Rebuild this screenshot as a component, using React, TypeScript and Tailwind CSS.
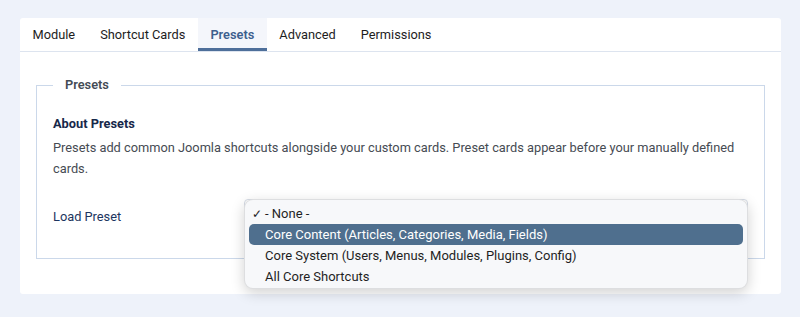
import { useState } from "react";

const tabs = ["Module", "Shortcut Cards", "Presets", "Advanced", "Permissions"];

const presetOptions = [
  "- None -",
  "Core Content (Articles, Categories, Media, Fields)",
  "Core System (Users, Menus, Modules, Plugins, Config)",
  "All Core Shortcuts",
];

export default function App() {
  const [active, setActive] = useState("Presets");
  const [selected] = useState(0);
  const [hovered, setHovered] = useState(1);

  return (
    <div className="min-h-screen bg-[#eef2fa] pt-[18px] pl-[20px] pr-[19px] font-['Roboto',sans-serif]">
      <div className="bg-white rounded-[3px] h-[276px]">
        {/* tabs */}
        <div className="flex h-[34px] border-b border-[#dde4ef]">
          {tabs.map((t) => (
            <button
              key={t}
              onClick={() => setActive(t)}
              className={
                t === active
                  ? "px-[12.5px] h-full text-[12.8px] font-semibold text-[#3d5f8e] bg-[#f4f6fb] border-b-[3px] border-[#4e6f9a] pt-[3px]"
                  : "px-[12.5px] h-full text-[12.8px] text-[#1d1d1d]"
              }
            >
              {t}
            </button>
          ))}
        </div>

        <div className="px-[16px] pt-[23px]">
          <fieldset className="border border-[#cbd8ea] px-[16px] pt-[19px] pb-[23px] m-0">
            <legend className="px-[12px] text-[12.8px] font-semibold text-[#444b55] leading-[20px]">
              Presets
            </legend>

            <h3 className="text-[12.8px] font-bold text-[#16284a] leading-[20px]">About Presets</h3>
            <p className="mt-[3px] text-[12.8px] text-[#464b53] leading-[21px] pr-[10px]">
              Presets add common Joomla shortcuts alongside your custom cards. Preset cards appear before your manually defined cards.
            </p>

            <div className="flex items-center mt-[20px] h-[36px]">
              <label className="w-[191px] text-[12.8px] text-[#1c3560]">Load Preset</label>
              <div className="relative w-[504px] h-[36px]">
                <div className="h-full rounded-[4px] border border-[#d5dbe5] bg-white" />
                {/* open native-style menu */}
                <div className="absolute left-0 top-0 w-[504px] h-[90px] rounded-[9px] bg-[#f7f8fa] border border-black/10 shadow-[0_4px_14px_rgba(0,0,0,0.18)] pt-[3px] pb-[2px] px-[4px] z-10">
                  {presetOptions.map((o, i) => (
                    <div
                      key={o}
                      onMouseEnter={() => setHovered(i)}
                      className={
                        i === hovered
                          ? "relative h-[21px] flex items-center pl-[16px] rounded-[5px] bg-[#4f6f8e] text-white text-[13px]"
                          : "relative h-[21px] flex items-center pl-[16px] rounded-[5px] text-[#1f1f1f] text-[13px]"
                      }
                    >
                      {i === selected && (
                        <span className="absolute left-[3px] text-[12px]">✓</span>
                      )}
                      {o}
                    </div>
                  ))}
                </div>
              </div>
            </div>
          </fieldset>
        </div>
      </div>
    </div>
  );
}
